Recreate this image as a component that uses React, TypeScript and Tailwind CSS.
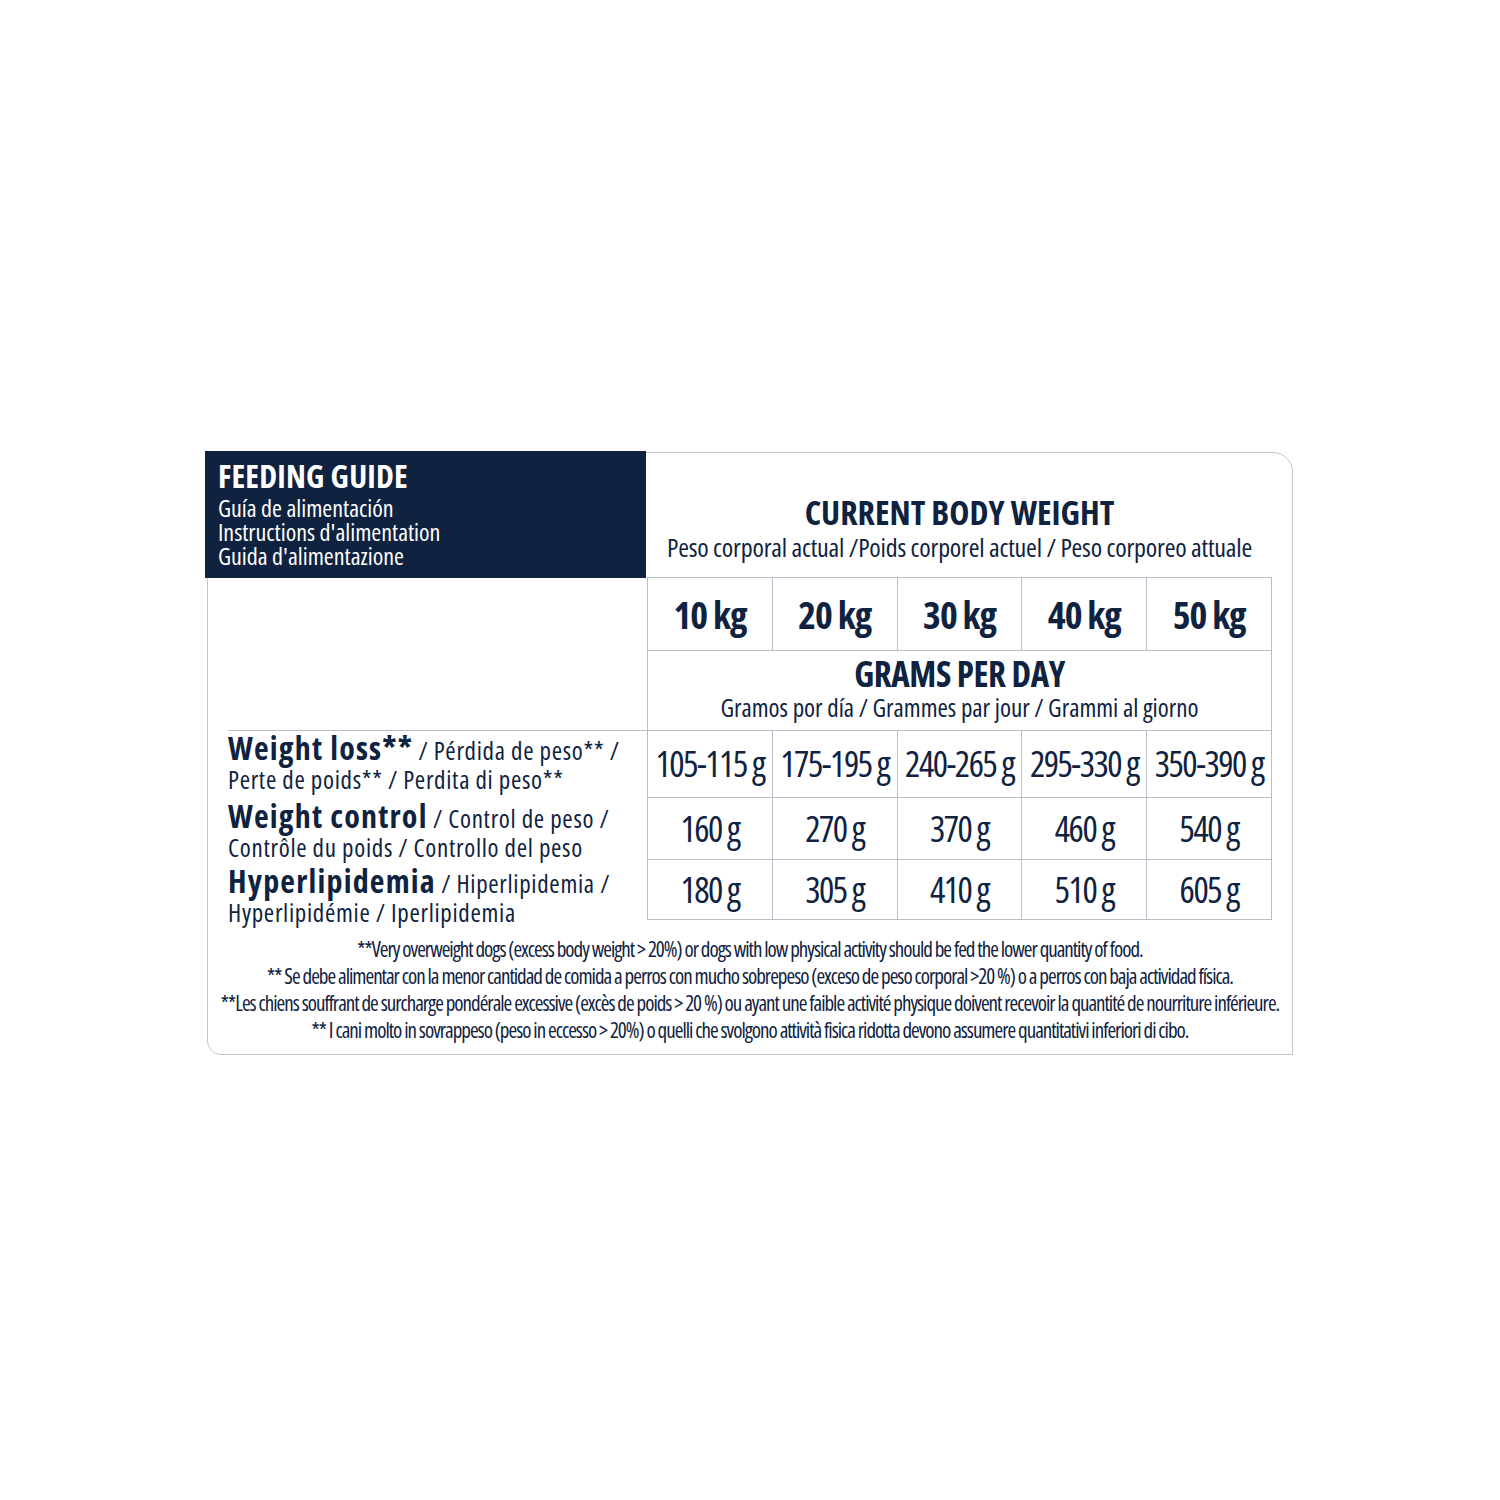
const weights = ["10 kg", "20 kg", "30 kg", "40 kg", "50 kg"];

const rows = [
  {
    bold: "Weight loss**",
    rest: " / Pérdida de peso** /",
    line2: "Perte de poids** / Perdita di peso**",
    values: ["105-115 g", "175-195 g", "240-265 g", "295-330 g", "350-390 g"],
    height: "h-[67px]",
    gap: "mt-[2px]",
  },
  {
    bold: "Weight control",
    rest: " / Control de peso /",
    line2: "Contrôle du poids / Controllo del peso",
    values: ["160 g", "270 g", "370 g", "460 g", "540 g"],
    height: "h-[62px]",
    gap: "mt-[7px]",
  },
  {
    bold: "Hyperlipidemia",
    rest: " / Hiperlipidemia /",
    line2: "Hyperlipidémie / Iperlipidemia",
    values: ["180 g", "305 g", "410 g", "510 g", "605 g"],
    height: "h-[60px]",
    gap: "mt-[4px]",
  },
];

const notes = [
  "**Very overweight dogs (excess body weight > 20%) or dogs with low physical activity should be fed the lower quantity of food.",
  "** Se debe alimentar con la menor cantidad de comida a perros con mucho sobrepeso (exceso de peso corporal >20 %) o a perros con baja actividad física.",
  "**Les chiens souffrant de surcharge pondérale excessive (excès de poids > 20 %) ou ayant une faible activité physique doivent recevoir la quantité de nourriture inférieure.",
  "** I cani molto in sovrappeso (peso in eccesso > 20%) o quelli che svolgono attività fisica ridotta devono assumere quantitativi inferiori di cibo.",
];

export default function App() {
  return (
    <div className="min-h-[1500px] bg-white flex justify-center pt-[452px] font-['Open_Sans',sans-serif] font-stretch-condensed text-[#0f2240]">
      <div className="w-[1086px] h-[603px] border border-[#c3c8cf] rounded-tr-[20px] rounded-bl-[14px] flex flex-col">
        {/* header strip */}
        <div className="flex h-[124px]">
          <div className="-ml-[3px] -mt-[2px] w-[441px] h-[127px] shrink-0 bg-[#0f2240] text-white pl-[13px] pt-[9px]">
            <div className="text-[32px] leading-[32px] font-bold tracking-[0.2px] whitespace-nowrap">FEEDING GUIDE</div>
            <div className="mt-[4px] text-[24px] leading-[24px] whitespace-nowrap">
              <div>Guía de alimentación</div>
              <div>Instructions d'alimentation</div>
              <div>Guida d'alimentazione</div>
            </div>
          </div>
          <div className="ml-[1px] w-[625px] flex flex-col items-center pt-[42px]">
            <div className="text-[34px] leading-[34px] font-bold whitespace-nowrap">CURRENT BODY WEIGHT</div>
            <div className="mt-[5px] text-[26px] leading-[26px] tracking-[-0.2px] whitespace-nowrap">
              Peso corporal actual /Poids corporel actuel / Peso corporeo attuale
            </div>
          </div>
        </div>

        {/* table */}
        <div className="flex h-[344px]">
          <div className="w-[439px] shrink-0 pl-[20px] flex flex-col">
            <div className="h-[153px] shrink-0" />
            <div className="border-t border-[#b9bfc8]">
              {rows.map((r) => (
                <div key={r.bold} className={`${r.gap} text-[25px] leading-[29px] tracking-[0.7px] whitespace-nowrap`}>
                  <span className="text-[32px] font-bold tracking-[1.2px]">{r.bold}</span>
                  {r.rest}
                  <br />
                  {r.line2}
                </div>
              ))}
            </div>
          </div>
          <div className="w-[625px] h-[343px] grid grid-cols-5 content-start border-l border-t border-[#b9bfc8]">
            {weights.map((w) => (
              <div key={w} className="h-[73px] border-r border-b border-[#b9bfc8] flex items-center justify-center text-[38px] leading-[38px] font-bold tracking-[-1px] whitespace-nowrap">
                {w}
              </div>
            ))}
            <div className="col-span-5 h-[80px] border-r border-b border-[#b9bfc8] flex flex-col items-center pt-[5px]">
              <div className="text-[35px] leading-[35px] font-bold tracking-[-0.4px] whitespace-nowrap">GRAMS PER DAY</div>
              <div className="mt-[4px] text-[25px] leading-[25px] whitespace-nowrap">
                Gramos por día / Grammes par jour / Grammi al giorno
              </div>
            </div>
            {rows.map((r) =>
              r.values.map((v) => (
                <div key={r.bold + v} className={`${r.height} border-r border-b border-[#b9bfc8] flex items-center justify-center text-[36px] leading-[36px] tracking-[-1.5px] whitespace-nowrap`}>
                  {v}
                </div>
              ))
            )}
          </div>
        </div>

        {/* footnotes */}
        <div className="pt-[15px] flex flex-col items-center text-[21px] leading-[27px] tracking-[-1px]">
          {notes.map((n) => (
            <div key={n} className="whitespace-nowrap">{n}</div>
          ))}
        </div>
      </div>
    </div>
  );
}
